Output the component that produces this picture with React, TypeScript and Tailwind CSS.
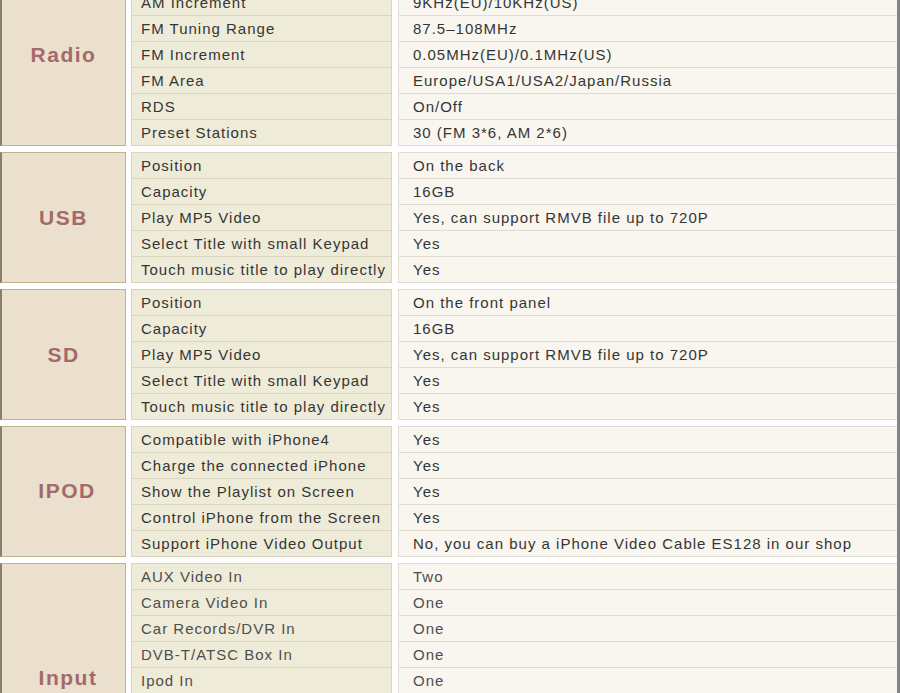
import React from "react";

type Row = [string, string];
type Group = { name: string; rows: Row[]; labelClass?: string; dim?: boolean };

const groups: Group[] = [
  {
    name: "Radio",
    rows: [
      ["AM Tuning Range", "522-1620KHz(EU)/530-1710KHz(US)"],
      ["AM Increment", "9KHz(EU)/10KHz(US)"],
      ["FM Tuning Range", "87.5\u2013108MHz"],
      ["FM Increment", "0.05MHz(EU)/0.1MHz(US)"],
      ["FM Area", "Europe/USA1/USA2/Japan/Russia"],
      ["RDS", "On/Off"],
      ["Preset Stations", "30 (FM 3*6, AM 2*6)"],
    ],
  },
  {
    name: "USB",
    rows: [
      ["Position", "On the back"],
      ["Capacity", "16GB"],
      ["Play MP5 Video", "Yes, can support RMVB file up to 720P"],
      ["Select Title with small Keypad", "Yes"],
      ["Touch music title to play directly", "Yes"],
    ],
  },
  {
    name: "SD",
    rows: [
      ["Position", "On the front panel"],
      ["Capacity", "16GB"],
      ["Play MP5 Video", "Yes, can support RMVB file up to 720P"],
      ["Select Title with small Keypad", "Yes"],
      ["Touch music title to play directly", "Yes"],
    ],
  },
  {
    name: "IPOD",
    labelClass: "pl-[7px] pb-[3px]",
    rows: [
      ["Compatible with iPhone4", "Yes"],
      ["Charge the connected iPhone", "Yes"],
      ["Show the Playlist on Screen", "Yes"],
      ["Control iPhone from the Screen", "Yes"],
      ["Support iPhone Video Output", "No, you can buy a iPhone Video Cable ES128 in our shop"],
    ],
  },
  {
    name: "Input",
    labelClass: "pl-[9px] pb-[7px]",
    dim: true,
    rows: [
      ["AUX Video In", "Two"],
      ["Camera Video In", "One"],
      ["Car Records/DVR In", "One"],
      ["DVB-T/ATSC Box In", "One"],
      ["Ipod In", "One"],
      ["AUX Audio In", "One"],
      ["Mic In", "One"],
      ["Steering Wheel Control", "Yes"],
      ["Reverse Camera In", "One"],
    ],
  },
];

const font = "font-['Liberation_Sans','Arial',sans-serif]";

function GroupBlock({ g }: { g: Group }) {
  const txt = g.dim ? "text-[#4e4e4e]" : "text-[#353535]";
  return (
    <div className="flex">
      <div className="w-[126px] shrink-0 flex items-center justify-center bg-[#ebdfcd] border border-[#bdb38f] border-l-2 border-l-[#86806c]">
        <span
          className={`${g.labelClass ?? ""} text-[21px] font-bold tracking-[1.5px] text-[#a4696a] leading-none`}
        >
          {g.name}
        </span>
      </div>
      <div className="ml-[5px] w-[261px] shrink-0 bg-[#efebd9] border-t border-l border-r border-[#d9d4bf]">
        {g.rows.map((r, i) => (
          <div
            key={i}
            className={`h-[26px] border-b border-[#d9d4bf] flex items-center pl-[9px] pt-[2px] text-[15px] tracking-[1px] whitespace-nowrap ${txt}`}
          >
            {r[0]}
          </div>
        ))}
      </div>
      <div className="ml-[6px] flex-1 bg-[#f8f6ef] border-t border-l border-[#dfdcd1]">
        {g.rows.map((r, i) => (
          <div
            key={i}
            className={`h-[26px] border-b border-[#dfdcd1] flex items-center pl-[14px] pt-[2px] text-[15px] tracking-[1px] whitespace-nowrap ${txt}`}
          >
            {r[1]}
          </div>
        ))}
      </div>
    </div>
  );
}

export default function App() {
  return (
    <div className={`w-[900px] h-[693px] overflow-hidden bg-white border-r-[3px] border-[#858585] ${font}`}>
      <div className="-mt-[37px] flex flex-col gap-[6px]">
        {groups.map((g) => (
          <GroupBlock key={g.name} g={g} />
        ))}
      </div>
    </div>
  );
}
